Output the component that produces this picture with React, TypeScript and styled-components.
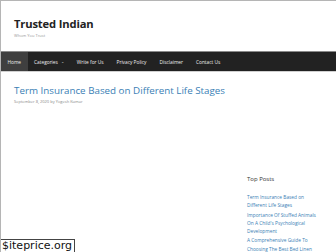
import styled, { createGlobalStyle } from "styled-components";

const GlobalStyle = createGlobalStyle`
  html, body {
    margin: 0;
    padding: 0;
    background: #b5b5b5;
  }
  body {
    font-family: "Open Sans", "Liberation Sans", sans-serif;
  }
`;

const Page = styled.div`
  position: relative;
  width: 335px;
  height: 251px;
  margin: 1px 0 0 1px;
  background: #fff;
  overflow: hidden;
`;

const Header = styled.header`
  height: 50px;
  padding: 15px 0 0 13px;
  box-sizing: border-box;
`;

const SiteTitle = styled.div`
  font-size: 11.2px;
  font-weight: 700;
  color: #222;
  line-height: 15px;
  letter-spacing: -0.15px;
`;

const Tagline = styled.div`
  font-size: 4px;
  color: #999;
  line-height: 5px;
  margin-top: 2px;
`;

const Nav = styled.nav`
  display: flex;
  height: 19px;
  background: #222;
  border-top: 1px solid #8a8a8a;
  border-bottom: 1px solid #d0d0d0;
`;

const NavItem = styled.div<{ $active?: boolean }>`
  display: flex;
  align-items: center;
  gap: 3px;
  padding: 0 6.5px;
  background: ${(p) => (p.$active ? "#3f3f3f" : "transparent")};
  color: #eee;
  font-size: 4.8px;
  white-space: nowrap;
`;

const Chevron = styled.span`
  font-size: 4px;
  color: #ccc;
`;

const Body = styled.div`
  display: flex;
`;

const Main = styled.main`
  flex: 1;
  padding: 13px 0 0 13px;
`;

const PostTitle = styled.h2`
  margin: 0;
  font-size: 9.8px;
  font-weight: 400;
  color: #3a80b5;
  line-height: 12px;
`;

const Meta = styled.div`
  font-size: 4px;
  color: #888;
  margin-top: 2px;
`;

const Sidebar = styled.aside`
  width: 89px;
  padding-top: 103px;
  box-sizing: border-box;
`;

const WidgetTitle = styled.div`
  font-size: 6px;
  color: #333;
  margin-bottom: 10px;
`;

const PostList = styled.ul`
  list-style: none;
  margin: 0;
  padding: 0;
  display: flex;
  flex-direction: column;
  gap: 1px;
`;

const PostLink = styled.li`
  font-size: 4.8px;
  line-height: 8.3px;
  color: #3a80b5;
`;

const Badge = styled.div`
  position: absolute;
  left: -1px;
  bottom: 0;
  background: #fff;
  border: 1px solid #444;
  border-bottom: none;
  color: #111;
  font-family: "DejaVu Sans", Verdana, sans-serif;
  font-size: 11px;
  line-height: 12px;
  padding: 0 2px 0 1px;
`;

const navItems = ["Categories", "Write for Us", "Privacy Policy", "Disclaimer", "Contact Us"];

const posts = [
  ["Term Insurance Based on", "Different Life Stages"],
  ["Importance Of Stuffed Animals", "On A Child's Psychological", "Development"],
  ["A Comprehensive Guide To", "Choosing The Best Bed Linen"],
];

export default function App() {
  return (
    <>
      <GlobalStyle />
      <Page>
        <Header>
          <SiteTitle>Trusted Indian</SiteTitle>
          <Tagline>Whom You Trust</Tagline>
        </Header>
        <Nav>
          <NavItem $active>Home</NavItem>
          {navItems.map((item) => (
            <NavItem key={item}>
              {item}
              {item === "Categories" && <Chevron>⌄</Chevron>}
            </NavItem>
          ))}
        </Nav>
        <Body>
          <Main>
            <PostTitle>Term Insurance Based on Different Life Stages</PostTitle>
            <Meta>September 8, 2020 by Yogesh Kumar</Meta>
          </Main>
          <Sidebar>
            <WidgetTitle>Top Posts</WidgetTitle>
            <PostList>
              {posts.map((lines) => (
                <PostLink key={lines[0]}>
                  {lines.map((l) => (
                    <div key={l}>{l}</div>
                  ))}
                </PostLink>
              ))}
            </PostList>
          </Sidebar>
        </Body>
        <Badge>$iteprice.org</Badge>
      </Page>
    </>
  );
}
